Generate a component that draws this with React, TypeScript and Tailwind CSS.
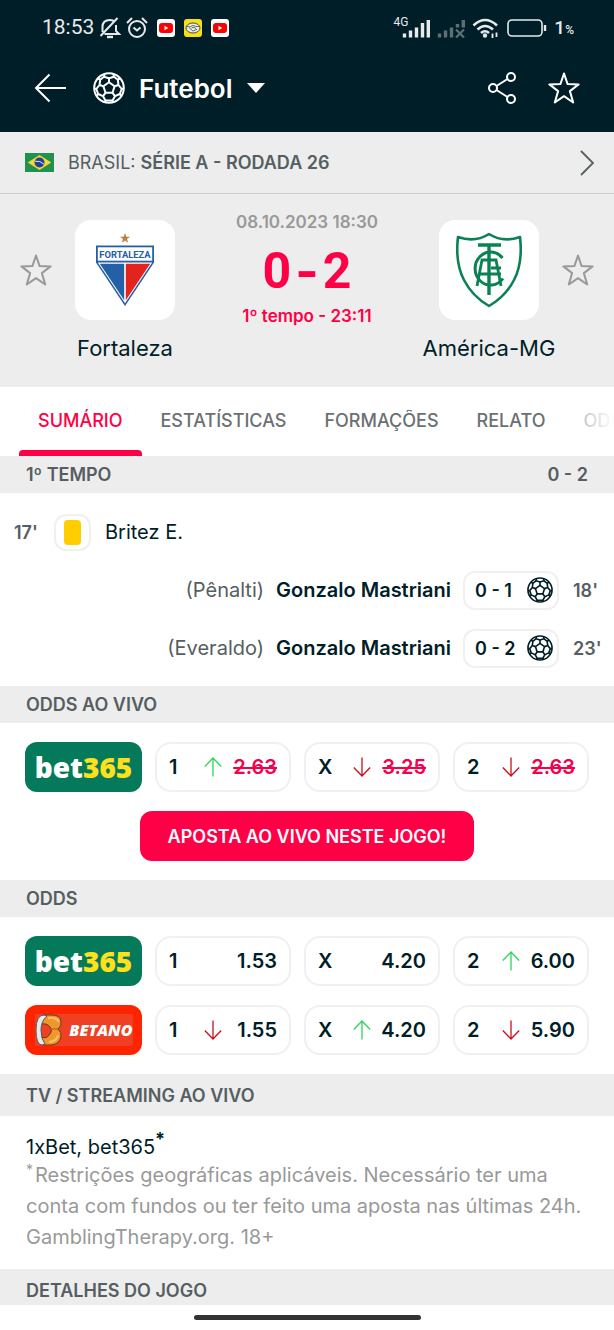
import { useState } from 'react';
import type { ReactNode } from 'react';
import clsx from 'clsx';

type Trend = 'up' | 'down' | null;

interface Odd {
  label: string;
  value: string;
  trend: Trend;
}

interface Goal {
  id: string;
  note: string;
  player: string;
  score: string;
  minute: string;
}

const TABS = ['SUMÁRIO', 'ESTATÍSTICAS', 'FORMAÇÕES', 'RELATO', 'ODDS'];

const GOALS: Goal[] = [
  { id: 'g1', note: '(Pênalti)', player: 'Gonzalo Mastriani', score: '0 - 1', minute: "18'" },
  { id: 'g2', note: '(Everaldo)', player: 'Gonzalo Mastriani', score: '0 - 2', minute: "23'" },
];

const LIVE_ODDS: Odd[] = [
  { label: '1', value: '2.63', trend: 'up' },
  { label: 'X', value: '3.25', trend: 'down' },
  { label: '2', value: '2.63', trend: 'down' },
];

const BET365_ODDS: Odd[] = [
  { label: '1', value: '1.53', trend: null },
  { label: 'X', value: '4.20', trend: null },
  { label: '2', value: '6.00', trend: 'up' },
];

const BETANO_ODDS: Odd[] = [
  { label: '1', value: '1.55', trend: 'down' },
  { label: 'X', value: '4.20', trend: 'up' },
  { label: '2', value: '5.90', trend: 'down' },
];

/* ── Icons ─────────────────────────────────────────── */

function SoccerBall({ className }: { className?: string }) {
  return (
    <svg viewBox="0 0 32 32" className={className} fill="none" stroke="currentColor" strokeWidth="2" strokeLinejoin="round">
      <circle cx="16" cy="16" r="14.8" />
      <path d="M16 10.2l5.6 4.1-2.1 6.5h-7l-2.1-6.5z" />
      <path d="M16 10.2V6.2M21.6 14.3l3.9-1.3M19.5 20.8l2.5 3.4M12.5 20.8L10 24.2M10.4 14.3L6.5 13" />
      <path d="M16 6.2l5.1-1.5 3.7 3 .7 5.3 3.2 4-1.9 5-4.8 2.2-2.5 4.4h-7L10 24.2 5.2 22l-1.9-5 3.2-4 .7-5.3 3.7-3z" />
      <path d="M21.1 4.7l-.8-2.6M10.9 4.7l.8-2.6M24.8 7.7l2.2-1.2M7.2 7.7L5 6.5M28.7 17l2-.5M3.3 17l-2-.5M26.8 22l1.4 1.6M5.2 22l-1.4 1.6M19.5 28.6l.6 1.8M12.5 28.6l-.6 1.8" />
    </svg>
  );
}

function Star({ className }: { className?: string }) {
  return (
    <svg viewBox="0 0 32 32" className={className} fill="none" stroke="currentColor" strokeWidth="2" strokeLinejoin="round">
      <path d="M16 1.500l3.600 10.600 11 .3-8.700 6.700 3.300 11.400L16 24.200l-9.200 6.300 3.300-11.400L1.400 12.400l11-.3z" />
    </svg>
  );
}

function TrendArrow({ trend }: { trend: Trend }) {
  if (!trend) return null;
  return (
    <svg
      viewBox="0 0 20 20"
      className={clsx('w-5 h-5', trend === 'up' ? 'text-[#2fd65a]' : 'text-[#c8101c] rotate-180')}
      fill="none"
      stroke="currentColor"
      strokeWidth="1.3"
    >
      <path d="M10 19.500V1M1.800 9.500L10 1l8.200 8.500" />
    </svg>
  );
}

function YoutubeBadge() {
  return (
    <svg viewBox="0 0 18 18" className="w-[18px] h-[18px]">
      <rect width="18" height="18" rx="3" fill="#fff" />
      <rect x="2" y="4" width="14" height="10" rx="3" fill="#f00" />
      <path d="M7.500 6.800v4.400l3.800-2.200z" fill="#fff" />
    </svg>
  );
}

function HandshakeBadge() {
  return (
    <svg viewBox="0 0 18 18" className="w-[18px] h-[18px]">
      <rect width="18" height="18" rx="3" fill="#f7e016" />
      <ellipse cx="9" cy="9" rx="7" ry="5" fill="#e9eef0" stroke="#4a4d3a" strokeWidth="1" />
      <path d="M2.600 7.400Q5.500 8.400 7.500 7q2-1 3.500.1 2 1 4.300.2M5 8.500l4 3.600 3.500-1.600M7.500 9l2.500-.8 3 2.600" fill="none" stroke="#555a4c" strokeWidth=".9" />
    </svg>
  );
}

function Signal({ off = false }: { off?: boolean }) {
  return (
    <svg viewBox="0 0 28 19" className={clsx('w-7 h-[19px]', off && 'opacity-40')} fill="none" stroke="#e6eaec" strokeWidth="3.400">
      <path d="M2.500 18.500v-4M8.500 18.500v-7M14.500 18.500v-10" />
      {off ? <path d="M20.500 8.500V5M26.300 8.500V1" /> : <path d="M20.500 18.500V4M26.300 18.500V1" />}
      {off && <path d="M19 10.500l8 8M27 10.500l-8 8" strokeWidth="2.200" />}
    </svg>
  );
}

function FortalezaCrest() {
  return (
    <svg viewBox="0 0 60 76" className="w-[60px] h-[76px]" role="img" aria-label="Fortaleza">
      <path d="M30 1l1.300 3.700h3.800L32 7l1.100 3.700L30 8.500l-3.100 2.200L28 7l-3.100-2.300h3.800z" fill="#b9803f" />
      <path d="M1 13.500h58v17L30 74 1 30.500z" fill="#2460a5" />
      <path d="M2.800 30.500h54.400L30 71.200z" fill="#fff" />
      <path d="M4.800 31.800h24.400v36.500z" fill="#2460a5" />
      <path d="M30.800 31.800h24.400L30.800 68.300z" fill="#e2231e" />
      <rect x="2.800" y="15.300" width="54.400" height="13.400" fill="#fff" />
      <text x="30" y="25.500" textAnchor="middle" fontFamily="Roboto, sans-serif" fontWeight="700" fontSize="9.400" fill="#2460a5">
        FORTALEZA
      </text>
    </svg>
  );
}

function AmericaCrest() {
  return (
    <svg viewBox="0 0 66 76" className="w-[66px] h-[76px]" fill="none" stroke="#0b8253" role="img" aria-label="América-MG">
      <path d="M2 5q17 6 31-3 14 9 31 3 3 26-6 43-8 16-25 26Q16 64 8 48-1 31 2 5z" strokeWidth="2.600" strokeLinejoin="round" />
      <path d="M22 13h23M33 13v50" strokeWidth="3.400" />
      <path d="M46.500 26A15.500 16.500 0 1 0 47 46.500" strokeWidth="3" />
      <path d="M21 54l5-26h14l5 26M22 42h23M35 36h10" strokeWidth="2.800" />
    </svg>
  );
}

function BrazilFlag() {
  return (
    <svg viewBox="0 0 29 19" className="w-[29px] h-[19px]">
      <rect width="29" height="19" fill="#229150" />
      <path d="M14.500 2l11.700 7.500L14.500 17 2.800 9.500z" fill="#f6d83a" />
      <circle cx="14.500" cy="9.500" r="5" fill="#24428f" />
      <path d="M10 8.200q5-.8 9 3" stroke="#dfe7f3" strokeWidth="1" fill="none" />
    </svg>
  );
}

/* ── Bookmaker logos ───────────────────────────────── */

function Bet365Logo() {
  return (
    <a href="#bet365" className="flex w-[117px] h-[50px] shrink-0 items-center justify-center rounded-xl bg-[#057a5b] font-['Noto_Sans',sans-serif] text-[28px] font-black leading-none text-white">
      bet<span className="text-[#ffe01b]">365</span>
    </a>
  );
}

function BetanoLogo() {
  return (
    <a href="#betano" className="flex w-[117px] h-[50px] shrink-0 items-center justify-center rounded-xl bg-[#ff2400]">
      <span className="flex h-8 w-[98px] items-center justify-between bg-[#f04023]">
        <svg viewBox="0 0 27 32" className="h-8 w-[27px]">
          <path d="M8 1h9q8 0 9 6 1 5-3 8 4 3 3 8-2 7-9 8H8q-3-4-2-8 6 2 8-2 4-4 1-8-3-4-9-3z" fill="#f0962e" stroke="#5d3a22" strokeWidth="1" />
          <path d="M9 1Q1 1 1 16t6 15l3-1q-4-5-4-14T12 2z" fill="#e8e8e8" stroke="#5b5653" strokeWidth="1" />
          <path d="M13 4q8-1 11 4M14 28q8-1 9-7" stroke="#fbc062" strokeWidth="2" fill="none" />
          <path d="M15 15h8" stroke="#b35a1e" strokeWidth="1" />
        </svg>
        <span className="font-['Open_Sans',sans-serif] text-base font-extrabold italic leading-none text-white">BETANO</span>
      </span>
    </a>
  );
}

/* ── Page parts ────────────────────────────────────── */

function SectionTitle({ title, right, tall = false }: { title: string; right?: string; tall?: boolean }) {
  return (
    <div className={clsx('flex items-center justify-between bg-[#ededed] px-[26px] text-[18px] font-semibold text-[#555e61]', tall ? 'h-[42px]' : 'h-[37px]')}>
      <h2>{title}</h2>
      {right && <span>{right}</span>}
    </div>
  );
}

function OddsRow({ logo, odds, closed = false }: { logo: ReactNode; odds: Odd[]; closed?: boolean }) {
  return (
    <div className="flex gap-[13px]">
      {logo}
      {odds.map(odd => (
        <button
          key={odd.label}
          className="flex h-[50px] flex-1 items-center rounded-2xl border-2 border-[#f0f0f0] px-3 text-[20px] font-semibold text-[#001e28]"
        >
          <span className="flex-1 text-left">{odd.label}</span>
          <TrendArrow trend={odd.trend} />
          <span className={clsx('w-[54px] text-right', closed && 'text-[#f5004b] line-through')}>{odd.value}</span>
        </button>
      ))}
    </div>
  );
}

function TeamCard({ name, crest }: { name: string; crest: ReactNode }) {
  return (
    <div className="flex w-[140px] flex-col items-center">
      <div className="flex h-[100px] w-[100px] items-center justify-center rounded-2xl bg-white">{crest}</div>
      <p className="mt-3 whitespace-nowrap text-[22px] leading-8 text-[#001e28]">{name}</p>
    </div>
  );
}

function StatusBar() {
  return (
    <div className="flex h-14 items-center justify-between pl-[42px] pr-10 font-['Roboto',sans-serif] text-[#e6eaec]">
      <div className="flex items-center gap-[9px]">
        <div className="flex items-center gap-[5px]">
          <span className="text-[21px]">18:53</span>
          <svg viewBox="0 0 22 22" className="h-[22px] w-[22px]" fill="none" stroke="currentColor" strokeWidth="2">
            <path d="M3.500 15V10q0-7 7.500-7 3 0 5 2M17 8v6l3 3H5.500M18.500 1L1.500 19" />
            <path d="M8 20h6" strokeWidth="2.400" />
          </svg>
          <svg viewBox="0 0 22 22" className="h-[22px] w-[22px]" fill="none" stroke="currentColor" strokeWidth="2">
            <circle cx="11" cy="12" r="8" />
            <path d="M1 6l5-5M21 6l-5-5M7.500 10.500L11 13.500l3.500-3" />
          </svg>
        </div>
        <YoutubeBadge />
        <HandshakeBadge />
        <YoutubeBadge />
      </div>
      <div className="flex items-center gap-[7px]">
        <div className="flex items-center">
          <span className="-mr-1.5 -mt-3 text-[12px] leading-none">4G</span>
          <Signal />
        </div>
        <Signal off />
        <svg viewBox="0 0 28 20" className="h-5 w-7" fill="none" stroke="currentColor" strokeWidth="2.600">
          <path d="M1.500 7.500q11.500-11 23.500 0M5.500 11.500q7.500-7 15.500 0M9 15q4-3.500 8 0" />
          <circle cx="13" cy="17.500" r="1.200" strokeWidth="2" />
          <path d="M20.500 20v-4.500M24.500 14.500V19" strokeWidth="1.800" />
        </svg>
        <svg viewBox="0 0 40 18" className="h-[18px] w-10" fill="none" stroke="currentColor">
          <rect x="1" y="1" width="34" height="16" rx="4" strokeWidth="1.600" />
          <path d="M38 6v6" strokeWidth="2.400" />
        </svg>
        <span className="text-[19px] font-medium">
          1<span className="text-[12px]">%</span>
        </span>
      </div>
    </div>
  );
}

export default function App() {
  const [tab, setTab] = useState('SUMÁRIO');

  return (
    <div className="min-h-screen bg-white font-['Inter',sans-serif] text-[#001e28]">
      {/* ── Header ── */}
      <header className="bg-[#001e28] pb-3 text-white">
        <StatusBar />
        <div className="flex h-16 items-center px-[34px]">
          <button aria-label="Voltar">
            <svg viewBox="0 0 32 30" className="h-[30px] w-8" fill="none" stroke="currentColor" strokeWidth="2">
              <path d="M32 15H2M15.500 1.500L2 15l13.500 13.500" />
            </svg>
          </button>
          <button className="ml-[27px] flex items-center">
            <SoccerBall className="h-8 w-8" />
            <span className="ml-[14px] text-[26px] font-semibold">Futebol</span>
            <svg viewBox="0 0 18 10" className="ml-[14px] h-2.5 w-[18px]">
              <path d="M0 0h18L9 10z" fill="currentColor" />
            </svg>
          </button>
          <div className="ml-auto flex items-center gap-8">
            <button aria-label="Compartilhar">
              <svg viewBox="0 0 28 32" className="h-8 w-7" fill="none" stroke="currentColor" strokeWidth="2">
                <circle cx="5" cy="16" r="4" />
                <circle cx="23" cy="5" r="4" />
                <circle cx="23" cy="27" r="4" />
                <path d="M8.500 14L19.500 7M8.500 18l11 7" />
              </svg>
            </button>
            <button aria-label="Favoritar jogo">
              <Star className="h-8 w-8" />
            </button>
          </div>
        </div>
      </header>

      {/* ── League ── */}
      <a href="#liga" className="flex h-[62px] items-center border-b border-[#cfcfcf] bg-[#ededed] pl-[25px] pr-5 text-[18px] text-[#555e61]">
        <BrazilFlag />
        <span className="ml-[14px]">
          BRASIL: <strong className="font-semibold">SÉRIE A - RODADA 26</strong>
        </span>
        <svg viewBox="0 0 14 26" className="ml-auto h-[26px] w-3.5" fill="none" stroke="currentColor" strokeWidth="1.800">
          <path d="M1 1l12 12L1 25" />
        </svg>
      </a>

      {/* ── Scoreboard ── */}
      <section className="flex justify-between bg-[#ededed] px-5 pt-[26px] pb-[23px]">
        <div className="flex">
          <button aria-label="Favoritar Fortaleza" className="h-[100px] text-[#999]">
            <Star className="h-8 w-8" />
          </button>
          <div className="ml-[3px]">
            <TeamCard name="Fortaleza" crest={<FortalezaCrest />} />
          </div>
        </div>
        <div className="-mt-2.5 flex flex-col items-center">
          <p className="text-[17px] font-semibold leading-6 text-[#999]">08.10.2023 18:30</p>
          <p className="mt-3 flex gap-1 font-['Roboto',sans-serif] text-[50px] font-bold leading-[50px] text-[#ff0046]">
            <span>0</span>
            <span className="font-['Inter',sans-serif]">-</span>
            <span>2</span>
          </p>
          <p className="mt-2 text-[17px] font-semibold leading-6 text-[#ff0046]">1º tempo - 23:11</p>
        </div>
        <div className="flex">
          <div className="mr-[3px]">
            <TeamCard name="América-MG" crest={<AmericaCrest />} />
          </div>
          <button aria-label="Favoritar América-MG" className="h-[100px] text-[#999]">
            <Star className="h-8 w-8" />
          </button>
        </div>
      </section>

      {/* ── Tabs ── */}
      <nav className="relative flex h-[69px] overflow-hidden pl-[19px]">
        {TABS.map(name => (
          <button
            key={name}
            onClick={() => setTab(name)}
            className={clsx(
              'flex shrink-0 flex-col justify-between px-[19px] pt-[22px] text-[18px] font-medium leading-6',
              tab === name ? 'text-[#ff0046]' : 'text-[#6b7072]',
            )}
          >
            {name}
            {tab === name && <span className="-mx-[19px] h-1.5 self-stretch rounded-t bg-[#ff0046]" />}
          </button>
        ))}
        <div className="pointer-events-none absolute inset-y-0 right-0 w-12 bg-linear-to-l from-white to-white/40" />
      </nav>

      {/* ── Events ── */}
      <SectionTitle title="1º TEMPO" right="0 - 2" />
      <ul className="pt-[10px] pb-[9px] text-[20px]">
        <li className="flex h-[58px] items-center pl-[14px]">
          <span className="w-[40px] text-[18px] font-semibold text-[#555e61]">17'</span>
          <span className="flex h-[37px] w-[37px] items-center justify-center rounded-xl border-2 border-[#f0f0f0]">
            <span className="h-[25px] w-[17px] rounded bg-[#ffcd00]" />
          </span>
          <span className="ml-[14px]">Britez E.</span>
        </li>
        {GOALS.map(goal => (
          <li key={goal.id} className="flex h-[58px] items-center justify-end pr-[14px]">
            <span className="text-[#555e61]">{goal.note}</span>
            <span className="ml-3 font-semibold">{goal.player}</span>
            <span className="ml-3 flex h-[39px] w-24 items-center justify-between rounded-xl border-2 border-[#f0f0f0] pl-[10px] pr-1 text-[18px] font-semibold">
              {goal.score}
              <SoccerBall className="h-[26px] w-[26px]" />
            </span>
            <span className="ml-[14px] w-[27px] text-[18px] font-semibold text-[#555e61]">{goal.minute}</span>
          </li>
        ))}
      </ul>

      {/* ── Live odds ── */}
      <SectionTitle title="ODDS AO VIVO" />
      <div className="flex flex-col gap-[19px] px-[25px] py-[19px]">
        <OddsRow logo={<Bet365Logo />} odds={LIVE_ODDS} closed />
        <button className="h-[50px] self-center rounded-xl bg-[#ff0046] px-7 text-[18px] font-semibold text-white">
          APOSTA AO VIVO NESTE JOGO!
        </button>
      </div>

      {/* ── Odds ── */}
      <SectionTitle title="ODDS" />
      <div className="flex flex-col gap-[19px] px-[25px] py-[19px]">
        <OddsRow logo={<Bet365Logo />} odds={BET365_ODDS} />
        <OddsRow logo={<BetanoLogo />} odds={BETANO_ODDS} />
      </div>

      {/* ── TV ── */}
      <SectionTitle title="TV / STREAMING AO VIVO" tall />
      <div className="px-[26px] pt-[18px] pb-4 text-[20px]">
        <p className="leading-[26px]">
          1xBet, bet365<sup className="text-[18px] leading-none font-bold">*</sup>
        </p>
        <p className="leading-[31px] text-[#999]">
          <sup className="mr-0.5 text-[14px] leading-none">*</sup>Restrições geográficas aplicáveis. Necessário ter uma conta com fundos ou ter feito uma aposta nas últimas 24h. GamblingTherapy.org. 18+
        </p>
      </div>
      <SectionTitle title="DETALHES DO JOGO" tall />

      {/* ── System gesture bar ── */}
      <div className="fixed inset-x-0 bottom-0 flex h-[25px] justify-center bg-white pt-[10px]">
        <span className="h-[5px] w-[227px] rounded-full bg-[#333]" />
      </div>
    </div>
  );
}
